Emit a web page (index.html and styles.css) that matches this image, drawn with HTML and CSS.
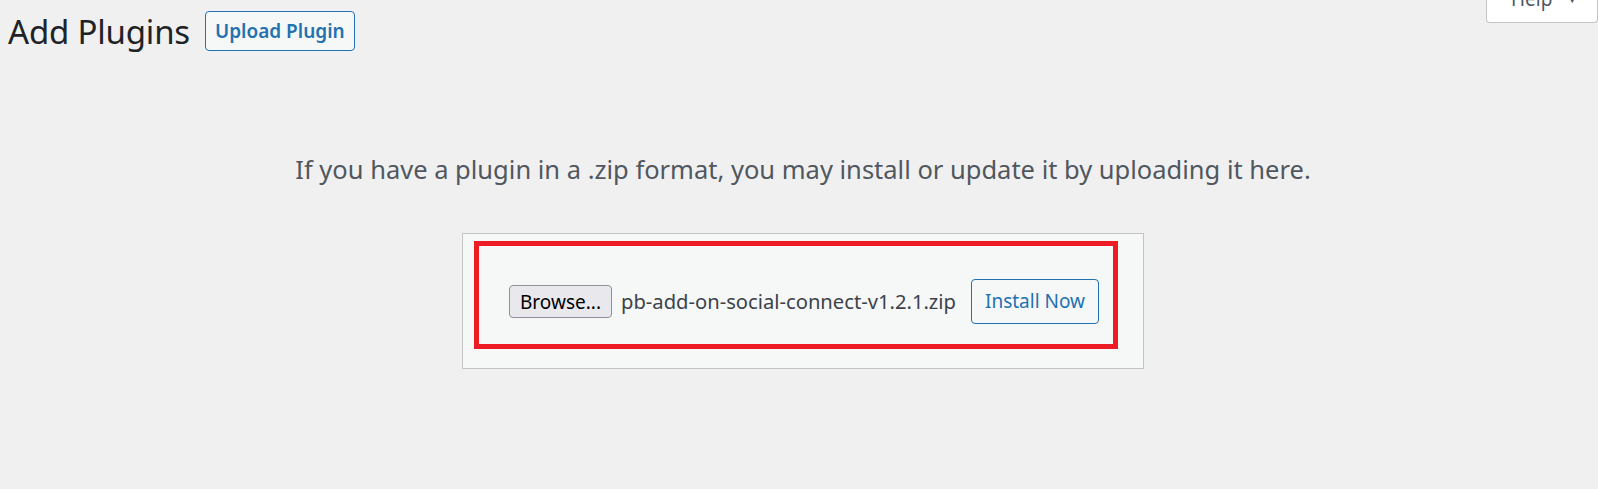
FILE: index.html
```html
<!DOCTYPE html>
<html lang="en">
<head>
    <meta charset="UTF-8">
    <meta name="viewport" content="width=device-width, initial-scale=1.0">
    <title>Add Plugins</title>
    <link rel="stylesheet" href="styles.css">
</head>
<body>

    <div class="wrap">
        <div class="page-header">
            <h1>Add Plugins</h1>
            <button type="button" class="title-action">Upload Plugin</button>
            <div class="help-tab">Help <span class="arrow">&#9660;</span></div>
        </div>

        <div class="upload-plugin">
            <p class="install-help">If you have a plugin in a .zip format, you may install or update it by uploading it here.</p>

            <form class="upload-form">
                <div class="highlight">
                    <button type="button" class="browse">Browse...</button>
                    <span class="file-name">pb-add-on-social-connect-v1.2.1.zip</span>
                    <button type="button" class="install-now">Install Now</button>
                </div>
            </form>
        </div>
    </div>

</body>
</html>
```

FILE: styles.css
```css
body {
    font-family: 'Noto Sans', 'Open Sans', sans-serif;
    background-color: #f0f0f1;
    color: #3c434a;
    margin: 0;
    padding: 0;
}
.wrap {
    padding-left: 8px;
}
.page-header {
    display: flex;
    align-items: center;
    height: 62px;
}
h1 {
    font-size: 33px;
    font-weight: 400;
    letter-spacing: -0.2px;
    color: #1d2327;
    margin: 0;
    line-height: 1;
}
.title-action {
    font-family: inherit;
    font-size: 19px;
    font-weight: 600;
    color: #2271b1;
    background-color: #f6f7f7;
    border: 1px solid #2271b1;
    border-radius: 4px;
    height: 40px;
    padding: 0 9px;
    margin-left: 15px;
    cursor: pointer;
}
.help-tab {
    align-self: flex-start;
    margin-left: auto;
    margin-top: -16px;
    width: 112px;
    height: 39px;
    box-sizing: border-box;
    padding: 0 0 0 24px;
    background-color: #fff;
    border: 1px solid #c3c4c7;
    border-top: none;
    border-radius: 0 0 4px 4px;
    color: #50575e;
    font-size: 19px;
    line-height: 30px;
}
.help-tab .arrow {
    font-size: 10px;
    margin-left: 10px;
    vertical-align: 3px;
}
.upload-plugin {
    text-align: center;
}
.install-help {
    font-size: 25.5px;
    color: #50575e;
    margin: 90px 0 45px;
    line-height: 1.4;
}
.upload-form {
    display: inline-block;
    width: 682px;
    box-sizing: border-box;
    padding: 7px 25px 19px 11px;
    background-color: #f6f7f7;
    border: 1px solid #c3c4c7;
    text-align: left;
}
.highlight {
    display: flex;
    align-items: center;
    border: 5px solid #ed1c24;
    padding: 33px 14px 20px 30px;
}
.browse {
    font-family: inherit;
    font-size: 19px;
    color: #000;
    background-color: #e9e9ed;
    border: 1px solid #8f8f9d;
    border-radius: 4px;
    height: 33px;
    width: 103px;
    padding: 0;
    margin-top: 1px;
}
.file-name {
    font-size: 20.2px;
    margin-left: 9px;
}
.install-now {
    font-family: inherit;
    font-size: 19px;
    color: #2271b1;
    background-color: #f6f7f7;
    border: 1px solid #2271b1;
    border-radius: 4px;
    height: 45px;
    width: 128px;
    padding: 0;
    margin-left: auto;
}
```
